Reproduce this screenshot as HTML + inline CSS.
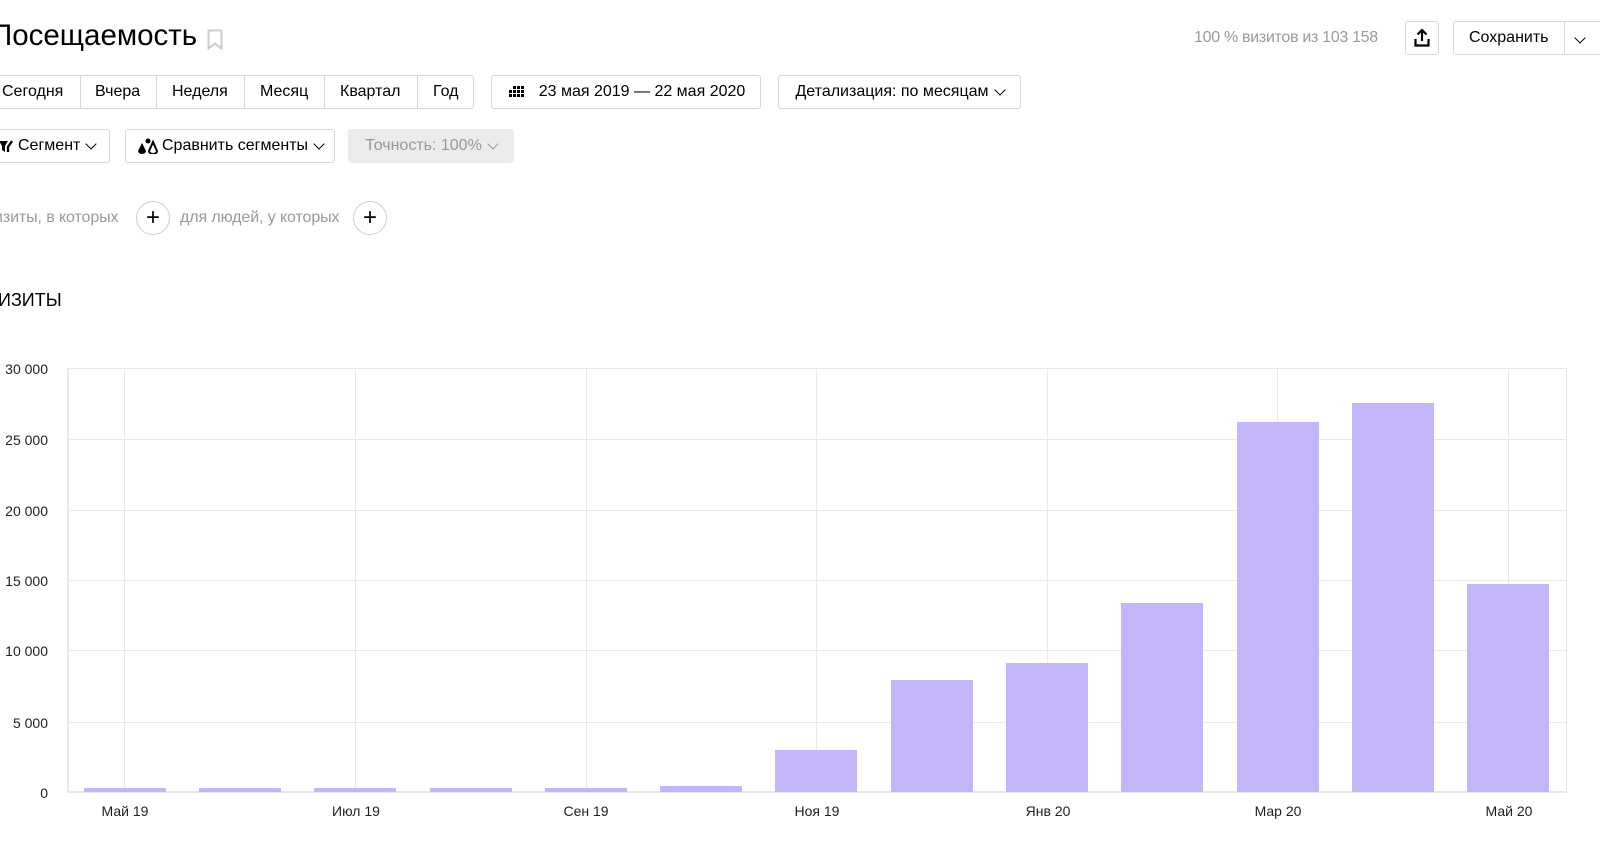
<!DOCTYPE html>
<html><head><meta charset="utf-8"><style>
*{box-sizing:border-box;margin:0;padding:0}
body{width:1600px;height:850px;overflow:hidden;background:#fff;font-family:"Liberation Sans",Arial,sans-serif;color:#000;position:relative}
.a{position:absolute}
.btn{position:absolute;border:1px solid #d6d6d6;border-radius:3px;background:#fff;font-size:16px;display:flex;align-items:center;justify-content:center;white-space:nowrap}
.chev{display:inline-block;width:8px;height:8px;border-right:1.5px solid #000;border-bottom:1.5px solid #000;transform:rotate(45deg);margin-left:7px;margin-top:-5px}
.circ{position:absolute;width:34px;height:34px;border:1px solid #ccc;border-radius:50%;font-size:24px;display:flex;align-items:center;justify-content:center;top:201px}
.gl{position:absolute;background:#e8e8e8}
.bar{position:absolute;background:#c4b4f8;width:82px}
.yl{position:absolute;left:0;width:48px;text-align:right;font-size:14px;color:#222}
.xl{position:absolute;width:100px;text-align:center;font-size:14px;color:#222;top:803px}
</style></head><body>
<div class="a" style="left:-9px;top:19px;font-size:29.5px">Посещаемость</div>
<svg class="a" style="left:207px;top:29px" width="16" height="21"><path d="M1.5 1.5h13v18l-6.5-5-6.5 5z" fill="none" stroke="#ccc" stroke-width="2"/></svg>

<div class="a" style="left:1194px;top:29px;font-size:16px;color:#999;letter-spacing:-0.3px">100 % визитов из 103 158</div>
<div class="btn" style="left:1405px;top:21px;width:34px;height:34px"><svg width="16" height="18"><path d="M8 1v11M3.5 5.5L8 1l4.5 4.5M1.5 10v6.5h13V10" fill="none" stroke="#000" stroke-width="2.2"/></svg></div>
<div class="btn" style="left:1453px;top:21px;width:170px;height:34px;justify-content:flex-start;padding-left:15px">Сохранить</div>
<div class="a" style="left:1564px;top:22px;width:1px;height:32px;background:#d6d6d6"></div>
<div class="a" style="left:1576px;top:29px"><span class="chev" style="margin:0"></span></div>

<div class="btn" style="left:-20px;top:75px;width:494px;height:34px"></div>
<div class="a" style="left:2px;top:83px;font-size:16px">Сегодня</div>
<div class="a" style="left:80px;top:76px;width:1px;height:32px;background:#d6d6d6"></div>
<div class="a" style="left:95px;top:83px;font-size:16px">Вчера</div>
<div class="a" style="left:156px;top:76px;width:1px;height:32px;background:#d6d6d6"></div>
<div class="a" style="left:172px;top:83px;font-size:16px">Неделя</div>
<div class="a" style="left:244px;top:76px;width:1px;height:32px;background:#d6d6d6"></div>
<div class="a" style="left:260px;top:83px;font-size:16px">Месяц</div>
<div class="a" style="left:324px;top:76px;width:1px;height:32px;background:#d6d6d6"></div>
<div class="a" style="left:340px;top:83px;font-size:16px">Квартал</div>
<div class="a" style="left:417px;top:76px;width:1px;height:32px;background:#d6d6d6"></div>
<div class="a" style="left:433px;top:83px;font-size:16px">Год</div>

<div class="btn" style="left:491px;top:75px;width:270px;height:34px"><svg width="18" height="13" style="margin-right:14px"><g fill="#000"><rect x="6" y="0" width="3" height="3"/><rect x="10" y="0" width="3" height="3"/><rect x="14" y="0" width="3" height="3"/><rect x="2" y="4" width="3" height="3"/><rect x="6" y="4" width="3" height="3"/><rect x="10" y="4" width="3" height="3"/><rect x="14" y="4" width="3" height="3"/><rect x="2" y="8" width="3" height="3"/><rect x="6" y="8" width="3" height="3"/><rect x="10" y="8" width="3" height="3"/><rect x="14" y="8" width="3" height="3"/></g></svg>23 мая 2019 — 22 мая 2020</div>
<div class="btn" style="left:778px;top:75px;width:243px;height:34px">Детализация: по месяцам<span class="chev"></span></div>

<div class="btn" style="left:-20px;top:129px;width:130px;height:34px;justify-content:flex-start;padding-left:18px"><svg width="14" height="13" style="margin-right:5px"><path d="M0 1h9L6 6v6l-3-2V6z" fill="#000"/><path d="M9 12V7l4-6" stroke="#000" stroke-width="2.4" fill="none"/></svg>Сегмент<span class="chev"></span></div>
<div class="btn" style="left:125px;top:129px;width:210px;height:34px"><svg width="22" height="16" style="margin-right:3px"><path d="M5 5L1 13a4 3 0 008 0z" fill="#000"/><circle cx="11" cy="3" r="2.5" fill="#000"/><path d="M16 4l-4 9a4 3 0 008 0z" fill="none" stroke="#000" stroke-width="2"/></svg>Сравнить сегменты<span class="chev"></span></div>
<div class="btn" style="left:348px;top:129px;width:166px;height:34px;background:#ebebeb;border-color:#ebebeb;color:#999">Точность: 100%<span class="chev" style="border-color:#999"></span></div>

<div class="a" style="left:-6px;top:209px;font-size:16px;color:#999;letter-spacing:-0.1px">изиты, в которых</div>
<div class="circ" style="left:136px">+</div>
<div class="a" style="left:180px;top:209px;font-size:16px;color:#999;letter-spacing:-0.1px">для людей, у которых</div>
<div class="circ" style="left:353px">+</div>

<div class="a" style="left:-2px;top:290px;font-size:18px">ИЗИТЫ</div>

<div class="a" style="left:67px;top:368px;width:1500px;height:425px;border:2px solid #e8e8e8;border-top:1px solid #e8e8e8;border-right:1px solid #e8e8e8"></div>
<div class="gl" style="left:67px;top:439px;width:1500px;height:1px"></div>
<div class="gl" style="left:67px;top:510px;width:1500px;height:1px"></div>
<div class="gl" style="left:67px;top:580px;width:1500px;height:1px"></div>
<div class="gl" style="left:67px;top:650px;width:1500px;height:1px"></div>
<div class="gl" style="left:67px;top:722px;width:1500px;height:1px"></div>
<div class="gl" style="left:124px;top:368px;width:1px;height:424px"></div>
<div class="gl" style="left:355px;top:368px;width:1px;height:424px"></div>
<div class="gl" style="left:586px;top:368px;width:1px;height:424px"></div>
<div class="gl" style="left:816px;top:368px;width:1px;height:424px"></div>
<div class="gl" style="left:1047px;top:368px;width:1px;height:424px"></div>
<div class="gl" style="left:1277px;top:368px;width:1px;height:424px"></div>
<div class="gl" style="left:1508px;top:368px;width:1px;height:424px"></div>

<div class="bar" style="left:84px;top:788px;height:4px"></div>
<div class="bar" style="left:199px;top:788px;height:4px"></div>
<div class="bar" style="left:314px;top:788px;height:4px"></div>
<div class="bar" style="left:430px;top:788px;height:4px"></div>
<div class="bar" style="left:545px;top:788px;height:4px"></div>
<div class="bar" style="left:660px;top:786px;height:6px"></div>
<div class="bar" style="left:775px;top:750px;height:42px"></div>
<div class="bar" style="left:891px;top:680px;height:112px"></div>
<div class="bar" style="left:1006px;top:663px;height:129px"></div>
<div class="bar" style="left:1121px;top:603px;height:189px"></div>
<div class="bar" style="left:1237px;top:422px;height:370px"></div>
<div class="bar" style="left:1352px;top:403px;height:389px"></div>
<div class="bar" style="left:1467px;top:584px;height:208px"></div>

<div class="yl" style="top:361px">30 000</div>
<div class="yl" style="top:432px">25 000</div>
<div class="yl" style="top:503px">20 000</div>
<div class="yl" style="top:573px">15 000</div>
<div class="yl" style="top:643px">10 000</div>
<div class="yl" style="top:715px">5 000</div>
<div class="yl" style="top:785px">0</div>

<div class="xl" style="left:75px">Май 19</div>
<div class="xl" style="left:306px">Июл 19</div>
<div class="xl" style="left:536px">Сен 19</div>
<div class="xl" style="left:767px">Ноя 19</div>
<div class="xl" style="left:998px">Янв 20</div>
<div class="xl" style="left:1228px">Мар 20</div>
<div class="xl" style="left:1459px">Май 20</div>
</body></html>
